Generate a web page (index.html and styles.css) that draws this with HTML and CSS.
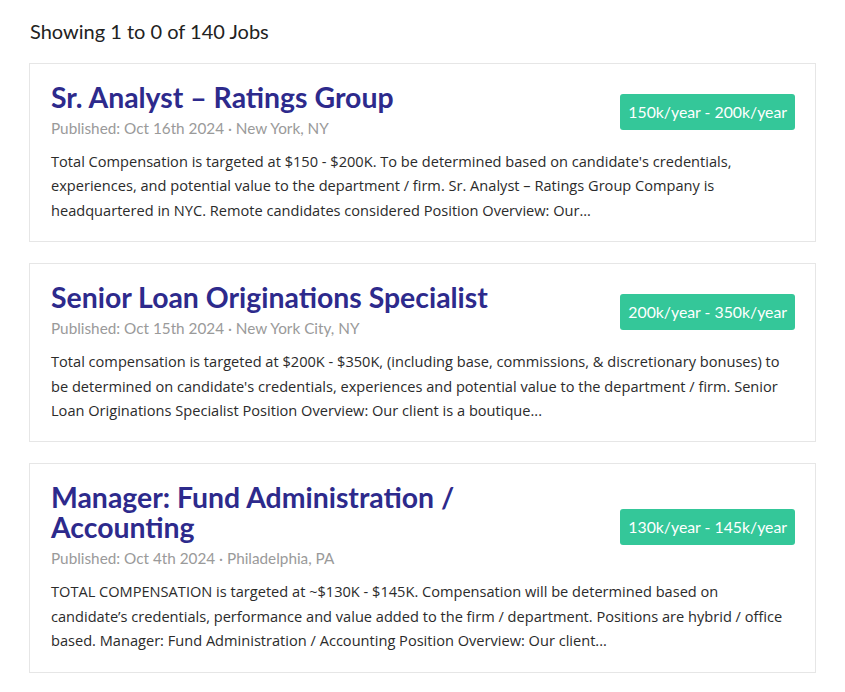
FILE: index.html
```html
<!DOCTYPE html>
<html>
<head>
<meta charset="utf-8">
<link rel="stylesheet" href="styles.css">
</head>
<body>
<div class="page">
  <p class="count">Showing 1 to 0 of 140 Jobs</p>
  <div class="list">
    <div class="card">
      <div class="head">
        <div class="head-text">
          <h2 class="title">Sr. Analyst – Ratings Group</h2>
          <p class="meta">Published: Oct 16th 2024 · New York, NY</p>
        </div>
        <span class="badge">150k/year - 200k/year</span>
      </div>
      <p class="desc">Total Compensation is targeted at $150 - $200K. To be determined based on candidate's credentials, experiences, and potential value to the department / firm. Sr. Analyst – Ratings Group Company is headquartered in NYC. Remote candidates considered Position Overview: Our...</p>
    </div>
    <div class="card">
      <div class="head">
        <div class="head-text">
          <h2 class="title">Senior Loan Originations Specialist</h2>
          <p class="meta">Published: Oct 15th 2024 · New York City, NY</p>
        </div>
        <span class="badge">200k/year - 350k/year</span>
      </div>
      <p class="desc">Total compensation is targeted at $200K - $350K, (including base, commissions, &amp; discretionary bonuses) to be determined on candidate's credentials, experiences and potential value to the department / firm. Senior Loan Originations Specialist Position Overview: Our client is a boutique...</p>
    </div>
    <div class="card">
      <div class="head">
        <div class="head-text">
          <h2 class="title">Manager: Fund Administration / Accounting</h2>
          <p class="meta">Published: Oct 4th 2024 · Philadelphia, PA</p>
        </div>
        <span class="badge">130k/year - 145k/year</span>
      </div>
      <p class="desc">TOTAL COMPENSATION is targeted at ~$130K - $145K. Compensation will be determined based on candidate’s credentials, performance and value added to the firm / department. Positions are hybrid / office based. Manager: Fund Administration / Accounting Position Overview: Our client...</p>
    </div>
  </div>
</div>
</body>
</html>
```

FILE: styles.css
```css
* { box-sizing: border-box; }
body {
  margin: 0;
  background: #fff;
  font-family: "Lato", "Noto Sans", sans-serif;
  color: #2b2b2b;
}
.page {
  padding: 17px 29px 0 29px;
  width: 845px;
}
.count {
  margin: 0 0 0 1px;
  font-size: 20px;
  line-height: 28px;
  color: #222;
}
.list {
  margin-top: 18px;
  display: flex;
  flex-direction: column;
  gap: 21px;
}
.card {
  border: 1px solid #e6e6e6;
  padding: 18px 20px 19px 21px;
  width: 787px;
}
.head {
  display: flex;
  align-items: center;
  justify-content: space-between;
  gap: 20px;
}
.head-text { max-width: 480px; }
.title {
  margin: 0;
  font-family: "Lato", sans-serif;
  font-weight: 700;
  font-size: 28.4px;
  line-height: 30px;
  color: #2d2a8c;
}
.meta {
  margin: 5px 0 0 0;
  font-size: 15.3px;
  line-height: 22px;
  color: #9a9a9a;
}
.badge {
  flex: none;
  margin-top: 2px;
  background: #34c799;
  color: #fff;
  font-size: 15.8px;
  line-height: 20px;
  padding: 8px 8px;
  border-radius: 3px;
}
.desc {
  margin: 10px 0 0 0;
  font-family: "Open Sans", "Lato", sans-serif;
  font-size: 14.6px;
  line-height: 24.4px;
  color: #2b2b2b;
}
```
